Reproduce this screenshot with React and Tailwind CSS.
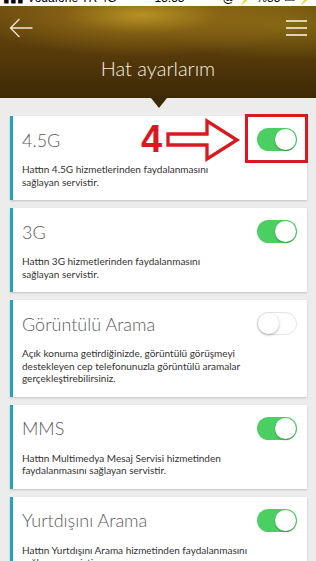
import React from 'react';

const services = [
  { title: '4.5G', on: true, lines: ['Hattın 4.5G hizmetlerinden faydalanmasını', 'sağlayan servistir.'] },
  { title: '3G', on: true, lines: ['Hattın 3G hizmetlerinden faydalanmasını', 'sağlayan servistir.'] },
  {
    title: 'Görüntülü Arama',
    on: false,
    lines: [
      'Açık konuma getirdiğinizde, görüntülü görüşmeyi',
      'destekleyen cep telefonunuzla görüntülü aramalar',
      'gerçekleştirebilirsiniz.',
    ],
  },
  { title: 'MMS', on: true, lines: ['Hattın Multimedya Mesaj Servisi hizmetinden', 'faydalanmasını sağlayan servistir.'] },
  { title: 'Yurtdışını Arama', on: true, lines: ['Hattın Yurtdışını Arama hizmetinden faydalanmasını', 'sağlayan servistir.'] },
];

const Toggle = ({ on }) =>
  on ? (
    <div className="relative w-[40px] h-[23px] rounded-full bg-[#4ccf62] shrink-0">
      <div className="absolute top-[1px] right-[1px] w-[21px] h-[21px] rounded-full bg-white shadow-[0_1px_2px_rgba(0,0,0,0.3)]" />
    </div>
  ) : (
    <div className="relative w-[40px] h-[23px] rounded-full bg-white border border-[#e4e4e4] shrink-0">
      <div className="absolute top-0 left-0 w-[21px] h-[21px] rounded-full bg-white shadow-[0_1px_3px_rgba(0,0,0,0.3)]" />
    </div>
  );

const ServiceCard = ({ item }) => (
  <div className="bg-white border-l-[3px] border-[#1fa6b9] shadow-[0_1px_2px_rgba(0,0,0,0.18)] pt-3 pb-3 pl-[9px] pr-[10px]">
    <div className="flex items-center justify-between h-[23px]">
      <span className="text-[18px] leading-none font-light text-[#5c5c5c]">{item.title}</span>
      <Toggle on={item.on} />
    </div>
    <div className="mt-3 text-[10px] leading-[12.5px] text-[#333]">
      {item.lines.map((l) => (
        <div key={l} className="whitespace-nowrap">{l}</div>
      ))}
    </div>
  </div>
);

export default function App() {
  return (
    <div className="relative w-[316px] h-[561px] overflow-hidden bg-[#ececec] font-['Lato','Open_Sans',sans-serif]">
      {/* status bar, mostly cut off */}
      <div className="h-[6px] bg-white overflow-hidden">
        <div className="-mt-[9px] flex justify-between px-[3px] text-[12px] leading-[14px] text-black font-['Liberation_Sans',sans-serif]">
          <span>▮▮▮ Vodafone TR  4G</span>
          <span>13:53</span>
          <span>@ ⚡ %85 ▭ ⚡</span>
        </div>
      </div>

      {/* header */}
      <div className="relative h-[92px] bg-[image:radial-gradient(ellipse_55%_45%_at_45%_10%,#b89224_0%,rgba(150,112,24,0.6)_45%,transparent_100%),radial-gradient(ellipse_40%_40%_at_90%_20%,rgba(140,112,20,0.8)_0%,transparent_100%),linear-gradient(180deg,#6a4a0e_0%,#55390a_55%,#3c2906_100%)]">
        <div className="flex items-center justify-between pt-[12px] pl-[9px] pr-[9px] h-[32px]">
          <svg width="24" height="20" viewBox="0 0 24 20" fill="none" stroke="#f1e8d2" strokeWidth="1.3">
            <path d="M23.5 10H1.5M10.5 1L1.5 10L10.5 19" />
          </svg>
          <div className="flex flex-col gap-[5.5px] w-[21px]">
            <div className="h-[1.5px] bg-[#dcd2b8]" />
            <div className="h-[1.5px] bg-[#dcd2b8]" />
            <div className="h-[1.5px] bg-[#dcd2b8]" />
          </div>
        </div>
        <div className="mt-[18px] text-center text-[20px] leading-[24px] font-light text-[#f6f0e1]">Hat ayarlarım</div>
        <div className="absolute left-[151px] -bottom-[10px] w-0 h-0 border-l-[8px] border-r-[8px] border-t-[10px] border-l-transparent border-r-transparent border-t-[#3c2906]" />
      </div>

      {/* service list */}
      <div className="flex flex-col gap-2 pt-[18px] pl-[10px] pr-[9px]">
        {services.map((s) => (
          <ServiceCard key={s.title} item={s} />
        ))}
      </div>

      {/* red annotation */}
      <div className="absolute left-[141px] top-[120px] text-[38px] leading-none font-bold text-[#d8191f] font-['Liberation_Sans',sans-serif]">4</div>
      <svg className="absolute left-[164px] top-[117px]" width="80" height="46" viewBox="0 0 80 46" fill="none" stroke="#d8191f" strokeWidth="3.3" strokeLinejoin="miter">
        <path d="M4 17H43V4L73 23L43 42V28H4Z" />
      </svg>
      <div className="absolute left-[245px] top-[114px] w-[63px] h-[49px] border-[3px] border-[#d8191f]" />
    </div>
  );
}
